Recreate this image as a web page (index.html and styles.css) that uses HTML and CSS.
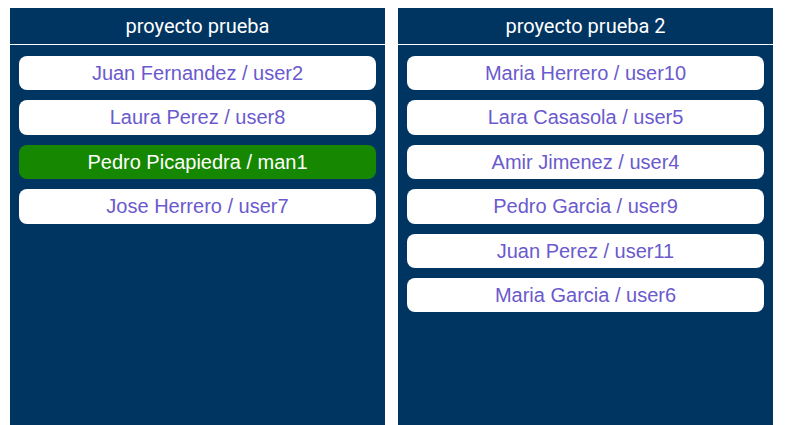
FILE: index.html
```html
<!DOCTYPE html>
<html>
<head>
<meta charset="utf-8">
<link rel="stylesheet" href="styles.css">
</head>
<body>
<div class="board">
  <div class="column">
    <div class="column-title">proyecto prueba</div>
    <div class="column-list">
      <div class="card">Juan Fernandez / user2</div>
      <div class="card">Laura Perez / user8</div>
      <div class="card card-active">Pedro Picapiedra / man1</div>
      <div class="card">Jose Herrero / user7</div>
    </div>
  </div>
  <div class="column">
    <div class="column-title">proyecto prueba 2</div>
    <div class="column-list">
      <div class="card">Maria Herrero / user10</div>
      <div class="card">Lara Casasola / user5</div>
      <div class="card">Amir Jimenez / user4</div>
      <div class="card">Pedro Garcia / user9</div>
      <div class="card">Juan Perez / user11</div>
      <div class="card">Maria Garcia / user6</div>
    </div>
  </div>
</div>
</body>
</html>
```

FILE: styles.css
```css
html, body {
  margin: 0;
  padding: 0;
  background: #ffffff;
}
body {
  padding: 8px 10px 0;
  height: 425px;
  box-sizing: border-box;
  overflow: hidden;
}
.board {
  display: flex;
  gap: 13px;
  height: 100%;
}
.column {
  width: 375px;
  background: #003562;
}
.column-title {
  height: 36px;
  border-bottom: 1px solid #ffffff;
  color: #ffffff;
  font-family: Roboto, sans-serif;
  font-size: 20px;
  line-height: 36px;
  text-align: center;
}
.column-list {
  display: flex;
  flex-direction: column;
  gap: 10px;
  padding: 11px 9px;
}
.card {
  height: 34.4px;
  line-height: 34px;
  background: #ffffff;
  border-radius: 8px;
  color: #6a5acd;
  font-family: "Liberation Sans", Arial, sans-serif;
  font-size: 20px;
  text-align: center;
}
.card-active {
  background: #168700;
  color: #ffffff;
}
```
